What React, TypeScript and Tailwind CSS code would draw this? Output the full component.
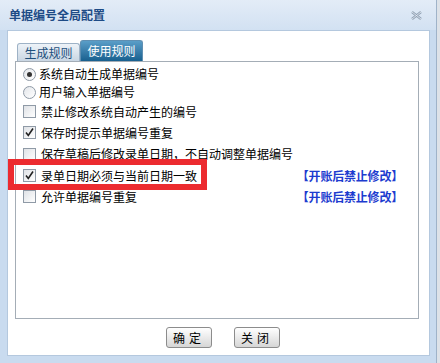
import React from "react";

const font = { fontFamily: '"Noto Sans CJK SC", "Noto Sans", sans-serif' };

function Radio({ checked }: { checked?: boolean }) {
  return (
    <span className="flex h-[13px] w-[13px] shrink-0 items-center justify-center rounded-full border border-[#8f9aa6] bg-gradient-to-br from-[#e3e6ea] to-[#ffffff]">
      {checked && <span className="h-[5px] w-[5px] rounded-full bg-[#333]" />}
    </span>
  );
}

function Check({ checked }: { checked?: boolean }) {
  return (
    <span className="flex h-[13px] w-[13px] shrink-0 items-center justify-center border border-[#8f9aa6] bg-gradient-to-br from-[#dfe2e6] to-[#ffffff]">
      {checked && (
        <svg width="11" height="11" viewBox="0 0 11 11">
          <path d="M2 5.5 L4.3 8.5 L9 1.5" fill="none" stroke="#222" strokeWidth="1.6" />
        </svg>
      )}
    </span>
  );
}

const Note = () => (
  <span className="ml-auto mr-[15px] font-bold text-[12px] tracking-[-0.2px] text-[#1d3ccf]">【开账后禁止修改】</span>
);

export default function App() {
  const checks = [
    { label: "禁止修改系统自动产生的编号", checked: false },
    { label: "保存时提示单据编号重复", checked: true },
    { label: "保存草稿后修改录单日期，不自动调整单据编号", checked: false },
    { label: "录单日期必须与当前日期一致", checked: true, note: true },
    { label: "允许单据编号重复", checked: false, note: true },
  ];
  return (
    <div className="relative h-[363px] w-[440px] overflow-hidden bg-[#dde2e8]" style={font}>
      <div className="flex h-[363px] w-[437px] flex-col border-r border-[#9fb3c9] bg-[#c9dbef]">
        {/* title bar */}
        <div className="flex h-[30px] shrink-0 items-center bg-gradient-to-b from-[#e3ecf7] to-[#d2e1f2] pl-[9px] pr-[14px]">
          <span className="text-[12px] font-bold text-[#1e4b86]">单据编号全局配置</span>
          <svg className="ml-auto" width="11" height="9" viewBox="0 0 11 9">
            <path d="M1 1 L10 8 M10 1 L1 8" stroke="#8fa0b3" strokeWidth="2.4" />
            <path d="M1 1 L10 8 M10 1 L1 8" stroke="#e8eef5" strokeWidth="0.8" />
          </svg>
        </div>
        {/* body */}
        <div className="ml-[7px] mr-[6px] flex h-[326px] flex-col border border-[#b4c8de] bg-white">
          <div className="ml-[9px] mt-[9px] flex h-[21px] items-end">
            <div className="flex h-[18px] w-[63px] items-center justify-center rounded-t-[3px] border border-b-0 border-[#9eb2c6] bg-gradient-to-b from-[#eef3f8] to-[#c9d6e3] text-[12px] text-[#1d4f7c]">
              生成规则
            </div>
            <div className="flex h-[21px] w-[63px] items-center justify-center rounded-t-[3px] border border-b-0 border-[#5f8fb2] bg-gradient-to-b from-[#5a9ec8] to-[#17608f] text-[12px] text-white">
              使用规则
            </div>
          </div>
          <div className="ml-[7px] mr-[10px] flex h-[258px] flex-col border border-[#a4adb6] pt-[3px] text-[12px] text-black">
            <div className="flex h-[18px] items-center gap-[3px] pl-[7px]">
              <Radio checked />
              <span>系统自动生成单据编号</span>
            </div>
            <div className="flex h-[18px] items-center gap-[3px] pl-[7px]">
              <Radio />
              <span>用户输入单据编号</span>
            </div>
            {checks.map((c) => (
              <div key={c.label} className="flex h-[21.3px] items-center gap-[5px] pl-[7px]">
                <Check checked={c.checked} />
                <span>{c.label}</span>
                {c.note && <Note />}
              </div>
            ))}
          </div>
          <div className="ml-[158px] mt-[8px] flex gap-[22px]">
            <button className="h-[21px] w-[46px] rounded-[3px] border border-[#8c8c8c] bg-gradient-to-b from-[#ffffff] to-[#d6d6d6] text-[12px] tracking-[4px] text-black">
              确定
            </button>
            <button className="h-[21px] w-[46px] rounded-[3px] border border-[#8c8c8c] bg-gradient-to-b from-[#ffffff] to-[#d6d6d6] text-[12px] tracking-[4px] text-black">
              关闭
            </button>
          </div>
        </div>
      </div>
      {/* annotation */}
      <div className="absolute left-[8px] top-[159px] h-[31px] w-[199px] border-[6px] border-[#ec2b2f]" />
    </div>
  );
}
